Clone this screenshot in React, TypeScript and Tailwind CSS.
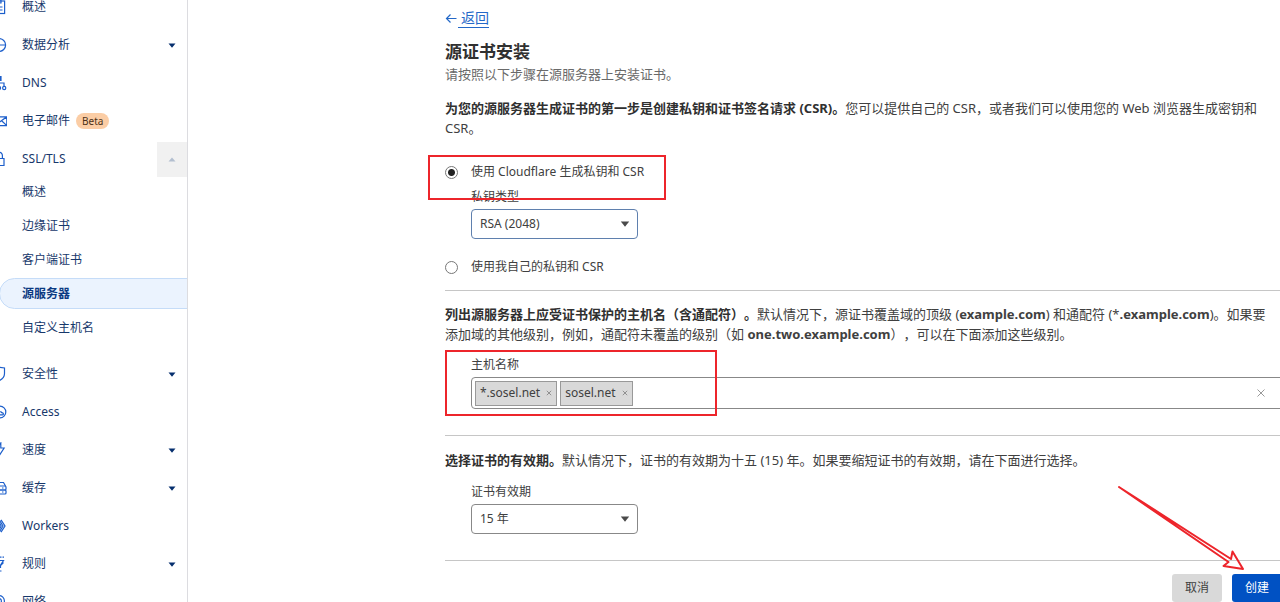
import React from 'react';

type NavItem = { label: string; icon: React.ReactNode; expandable?: boolean; beta?: boolean };

const topItems: NavItem[] = [
  {
    label: '概述',
    icon: (
      <>
        <rect x="2" y="2" width="11.6" height="12.5" />
        <path d="M5 1h5v3H5zM5 8h6.5M5 11h6.5" />
      </>
    ),
  },
  {
    label: '数据分析',
    expandable: true,
    icon: (
      <>
        <circle cx="8.200" cy="8" r="6.400" />
        <path d="M8 1.600V8h6.600M8 8l-4.600 4.500" />
      </>
    ),
  },
  {
    label: 'DNS',
    icon: (
      <>
        <path d="M6 1.500h4v4H6z" fill="currentColor" />
        <path d="M8 5.500V10M3 11V8h10v3M8 8v3" />
        <circle cx="3" cy="13" r="1.600" />
        <circle cx="8" cy="13" r="1.600" />
        <circle cx="13.200" cy="13" r="1.600" />
      </>
    ),
  },
  {
    label: '电子邮件',
    beta: true,
    icon: <path d="M1 3.800h14.800v8.800H1zM1 3.800l7.400 5.400 7.400-5.400M1 12.600l5.200-4.800M15.800 12.600l-5.200-4.800" />,
  },
];

const sslItem: NavItem = {
  label: 'SSL/TLS',
  icon: <path d="M3 7.500h10v7H3zM5 7.500v-3a3.200 3.200 0 0 1 6.400 0v3M8 10v2" />,
};

const subItems = ['概述', '边缘证书', '客户端证书', '源服务器', '自定义主机名'];

const bottomItems: NavItem[] = [
  {
    label: '安全性',
    expandable: true,
    icon: <path d="M8 1.200 13.500 2v5.500c0 3.300-2.300 5.800-5.500 7.200-3.200-1.400-5.500-3.900-5.500-7.200V2z" />,
  },
  {
    label: 'Access',
    icon: (
      <>
        <circle cx="9" cy="8" r="5.800" />
        <path d="M6 10.800h5.500c1.200 0 1.200-1.800 0-2-.8-.1-1.500-.5-2-1.500" />
      </>
    ),
  },
  { label: '速度', expandable: true, icon: <path d="M9.800 1v5h3.300L7.500 14.600V9H4z" /> },
  {
    label: '缓存',
    expandable: true,
    icon: (
      <>
        <rect x="2" y="6" width="13" height="4" rx="1" />
        <rect x="2" y="10" width="13" height="4" rx="1" />
        <path d="M2.500 6 4.500 2.500h8L14.500 6M11 8h1.500M11 12h1.500" />
      </>
    ),
  },
  {
    label: 'Workers',
    icon: <path d="M6 1.800 2.500 8 6 14.200M6.500 1.800 10.200 8l-3.700 6.200M10 1.800 14 8l-4 6.200M8.200 1.800 12 8l-3.800 6.200" />,
  },
  {
    label: '规则',
    expandable: true,
    icon: <path d="M2 1.200h1.500M6 1.200h1.500M9 1.200h1.500M11.500 1.200H13M3 4.500h9.500L9.500 9v3M5 8l4-3.500M9.500 9.500l3-3M9 15h1.500" />,
  },
  {
    label: '网络',
    icon: (
      <>
        <circle cx="8" cy="7" r="5.400" />
        <circle cx="8" cy="7" r="2.400" />
        <path d="M8 9.400v5.400" />
      </>
    ),
  },
];

function Caret({ className = '', up = false }: { className?: string; up?: boolean }) {
  return (
    <svg viewBox="0 0 8 5" className={className} fill="currentColor" aria-hidden="true">
      {up ? <path d="M4 .5 7.500 4.500H.5z" /> : <path d="M.5.5h7L4 4.800z" />}
    </svg>
  );
}

function NavRow({ item, open = false }: { item: NavItem; open?: boolean }) {
  return (
    <li className="flex h-[38px] items-center justify-between">
      <a href="#" className="-ml-[9px] flex items-center">
        <svg viewBox="0 0 16 16" className="mr-[15px] size-4 text-[#1d5fcb]" fill="none" stroke="currentColor" strokeWidth="1.200" aria-hidden="true">
          {item.icon}
        </svg>
        {item.label}
        {item.beta && (
          <span className="ml-1.5 rounded-full bg-[#fbcda5] px-1.5 text-[10px] leading-4 text-[#4b3118]">Beta</span>
        )}
      </a>
      {(item.expandable || open) && (
        <button
          type="button"
          aria-label={item.label}
          aria-expanded={open}
          className={open ? 'flex h-[35px] w-[30px] items-center justify-center bg-[#f1f1f1] text-[#b3bfd0]' : 'flex h-[35px] w-[30px] items-center justify-center text-[#062f6e]'}
        >
          <Caret up={open} className="h-[5px] w-2" />
        </button>
      )}
    </li>
  );
}

function Dropdown({ id, label, option, border }: { id: string; label: string; option: string; border: string }) {
  return (
    <div className="pl-[26px] text-xs">
      <label htmlFor={id} className="block leading-4">{label}</label>
      <div className="relative mt-1 w-[167px]">
        <select id={id} className={`h-[30px] w-full appearance-none rounded-[4px] border bg-white pl-2 ${border}`}>
          <option>{option}</option>
        </select>
        <Caret className="pointer-events-none absolute top-3 right-2 h-1.5 w-2.5 text-[#4a4a4a]" />
      </div>
    </div>
  );
}

function Choice({ label, checked = false }: { label: string; checked?: boolean }) {
  return (
    <label className="flex h-5 items-center gap-[13px] text-xs">
      <input
        type="radio"
        name="key"
        defaultChecked={checked}
        className="size-[13px] appearance-none rounded-full border border-[#777] bg-white checked:bg-[radial-gradient(circle,#222_3px,#fff_4px)]"
      />
      {label}
    </label>
  );
}

function Tag({ name }: { name: string }) {
  return (
    <span className="flex h-[25px] items-center gap-1.5 border border-[#999] bg-[#d9d9d9] px-1">
      {name}
      <button type="button" aria-label={`移除 ${name}`} className="text-[#888]">
        <svg viewBox="0 0 6 6" className="size-1.5" stroke="currentColor" strokeWidth="0.900" aria-hidden="true">
          <path d="m.8.8 4.400 4.400M5.200.8.8 5.200" />
        </svg>
      </button>
    </span>
  );
}

export default function App() {
  return (
    <div className="flex h-screen overflow-hidden bg-white font-['Noto_Sans','Noto_Sans_CJK_SC',sans-serif] text-[13px] leading-5 text-[#404040] [text-spacing-trim:space-all]">
      <nav className="w-[188px] shrink-0 overflow-hidden border-r border-[#dcdce0] text-xs text-[#17386b]">
        <ul className="-mt-3">
          {topItems.map((item) => <NavRow key={item.label} item={item} />)}
          <NavRow item={sslItem} open />
        </ul>
        <ul className="-mt-[3px] mb-2.5">
          {subItems.map((label) => (
            <li key={label} className="h-[34px] py-px">
              <a
                href="#"
                className={
                  label === '源服务器'
                    ? '-mr-px -ml-px flex h-[31px] items-center rounded-l-full border border-[#c5dcf8] bg-[#ebf3fe] pl-[22px] font-bold text-[#0b3a82]'
                    : 'flex h-[31px] items-center pl-[22px]'
                }
              >
                {label}
              </a>
            </li>
          ))}
        </ul>
        <ul>
          {bottomItems.map((item) => <NavRow key={item.label} item={item} />)}
        </ul>
      </nav>

      <main className="min-w-0 flex-1 overflow-hidden pt-2 pl-[257px]">
        <div className="min-w-[856px]">
          <a href="#" className="flex h-5 items-center text-sm leading-5 text-[#2468c8]">
            <svg viewBox="0 0 12 12" className="mr-px size-3" fill="none" stroke="currentColor" strokeWidth="1.200" aria-hidden="true">
              <path d="M11.500 6.500H1.500M5.500 2.500l-4 4 4 4" />
            </svg>
            <span className="border-b border-[#2468c8] pl-[3px] leading-[18px]">返回</span>
          </a>
          <h1 className="mt-3 text-[17px] leading-6 font-bold text-[#303030]">源证书安装</h1>
          <p className="text-[#6a6a6a]">请按照以下步骤在源服务器上安装证书。</p>
          <p className="mt-[14px]">
            <strong className="text-[#303030]">为您的源服务器生成证书的第一步是创建私钥和证书签名请求 (CSR)。</strong>
            您可以提供自己的 CSR，或者我们可以使用您的 Web 浏览器生成密钥和<br />CSR。
          </p>

          <div className="relative mt-6">
            <Choice label="使用 Cloudflare 生成私钥和 CSR" checked />
            <div className="mt-[7px]">
              <Dropdown id="key-type" label="私钥类型" option="RSA (2048)" border="border-[#5f80ae]" />
            </div>
            <div className="pointer-events-none absolute -top-[7px] -left-[17px] h-[45px] w-[238px] border-2 border-[#ed252b]" />
          </div>
          <div className="mt-[18px]">
            <Choice label="使用我自己的私钥和 CSR" />
          </div>

          <hr className="mt-[13px] border-[#c6c6c6]" />
          <p className="mt-[13px]">
            <strong className="text-[#303030]">列出源服务器上应受证书保护的主机名（含通配符）。</strong>
            默认情况下，源证书覆盖域的顶级 (<strong>example.com</strong>) 和通配符 (*<strong>.example.com</strong>)。如果要<br />
            添加域的其他级别，例如，通配符未覆盖的级别（如 <strong>one.two.example.com</strong>），可以在下面添加这些级别。
          </p>
          <div className="relative mt-[13px] pl-[26px] text-xs">
            <label htmlFor="hosts" className="block leading-4">主机名称</label>
            <div className="mt-1 flex h-8 items-center gap-[3px] rounded-[4px] border border-[#888] pl-[3px]">
              <Tag name="*.sosel.net" />
              <Tag name="sosel.net" />
              <input id="hosts" className="h-6 min-w-0 flex-1 outline-none" />
              <button type="button" aria-label="清除" className="mr-3 text-[#999]">
                <svg viewBox="0 0 8 8" className="size-2" stroke="currentColor" aria-hidden="true">
                  <path d="m.5.5 7 7M7.500.5l-7 7" />
                </svg>
              </button>
              <Caret className="mr-3 h-[5px] w-2 text-[#999]" />
            </div>
            <div className="pointer-events-none absolute -top-[7px] left-0 h-[66px] w-[272px] border-2 border-[#ed252b]" />
          </div>

          <hr className="mt-[26px] border-[#c6c6c6]" />
          <p className="my-[14px]">
            <strong className="text-[#303030]">选择证书的有效期。</strong>
            默认情况下，证书的有效期为十五 (15) 年。如果要缩短证书的有效期，请在下面进行选择。
          </p>
          <Dropdown id="validity" label="证书有效期" option="15 年" border="border-[#888]" />

          <hr className="mt-[26px] border-[#c6c6c6]" />
          <div className="relative mt-[13px] flex justify-end gap-2.5 pr-[19px] text-xs">
            <button type="button" className="h-7 w-[50px] rounded-[3px] bg-[#d9d9d9] text-[#404040]">取消</button>
            <button type="button" className="h-7 w-[50px] rounded-[3px] bg-[#0051c3] text-white">创建</button>
            <svg viewBox="0 0 128 86" className="pointer-events-none absolute -top-[89px] right-[56px] h-[86px] w-32" fill="none" stroke="#ed252b" strokeWidth="2" strokeLinejoin="round" aria-hidden="true">
              <path d="M2 2 114 74l1.500-7.500L126 84l-19.500-3 5-4z" transform="matrix(1 0 0 1 0 0)" />
            </svg>
          </div>
        </div>
      </main>
    </div>
  );
}
